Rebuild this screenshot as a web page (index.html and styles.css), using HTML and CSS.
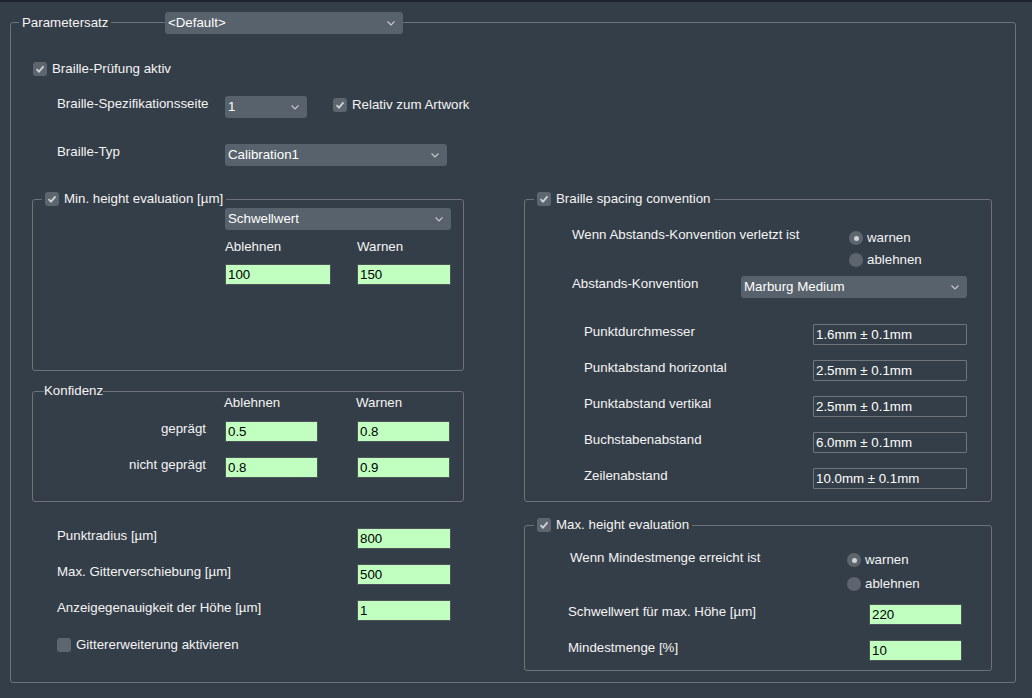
FILE: index.html
```html
<!DOCTYPE html>
<html lang="de">
  <head>
    <meta charset="UTF-8" />
    <title>Braille-Prüfung</title>
    <link rel="stylesheet" href="styles.css">
  </head>
  <body>
    <div class="topbar"></div>

    <section class="group outer">
      <div class="outer-head">
        <span class="title">Parametersatz</span>
        <div class="combo">&lt;Default&gt;<svg class="chev" width="8" height="5" viewBox="0 0 8 5"><polyline points="0.5,0.5 4,4 7.5,0.5"/></svg></div>
      </div>

      <!-- general braille settings -->
      <div class="intro">
        <label class="check"><span class="box on"><svg width="14" height="14" viewBox="0 0 14 14"><path d="M3.5 7.2 L6 9.7 L10.5 4.3"/></svg></span>Braille-Prüfung aktiv</label>

        <div class="row spec-row">
          <span class="lbl">Braille-Spezifikationsseite</span>
          <div class="combo combo-page">1<svg class="chev" width="8" height="5" viewBox="0 0 8 5"><polyline points="0.5,0.5 4,4 7.5,0.5"/></svg></div>
          <label class="check relative"><span class="box on"><svg width="14" height="14" viewBox="0 0 14 14"><path d="M3.5 7.2 L6 9.7 L10.5 4.3"/></svg></span>Relativ zum Artwork</label>
        </div>

        <div class="row type-row">
          <span class="lbl">Braille-Typ</span>
          <div class="combo combo-type">Calibration1<svg class="chev" width="8" height="5" viewBox="0 0 8 5"><polyline points="0.5,0.5 4,4 7.5,0.5"/></svg></div>
        </div>
      </div>

      <div class="columns">
        <!-- left column -->
        <div class="col">
          <div class="group box-min">
            <div class="group-head">
              <label class="check"><span class="box on"><svg width="14" height="14" viewBox="0 0 14 14"><path d="M3.5 7.2 L6 9.7 L10.5 4.3"/></svg></span>Min. height evaluation [µm]</label>
            </div>
            <div class="min-body">
              <div class="combo combo-threshold">Schwellwert<svg class="chev" width="8" height="5" viewBox="0 0 8 5"><polyline points="0.5,0.5 4,4 7.5,0.5"/></svg></div>
              <div class="pair-grid">
                <span>Ablehnen</span>
                <span>Warnen</span>
                <input class="num" value="100" readonly>
                <input class="num" value="150" readonly>
              </div>
            </div>
          </div>

          <div class="group box-conf">
            <div class="conf-head"><span class="title">Konfidenz</span></div>
            <div class="conf-grid">
              <span></span>
              <span>Ablehnen</span>
              <span>Warnen</span>
              <span class="side">geprägt</span>
              <input class="num" value="0.5" readonly>
              <input class="num" value="0.8" readonly>
              <span class="side">nicht geprägt</span>
              <input class="num" value="0.8" readonly>
              <input class="num" value="0.9" readonly>
            </div>
          </div>

          <div class="params">
            <div class="row">
              <span class="lbl">Punktradius [µm]</span>
              <input class="num" value="800" readonly>
            </div>
            <div class="row">
              <span class="lbl">Max. Gitterverschiebung [µm]</span>
              <input class="num" value="500" readonly>
            </div>
            <div class="row">
              <span class="lbl">Anzeigegenauigkeit der Höhe [µm]</span>
              <input class="num" value="1" readonly>
            </div>
            <label class="check grid-ext"><span class="box"></span>Gittererweiterung aktivieren</label>
          </div>
        </div>

        <!-- right column -->
        <div class="col">
          <div class="group box-spacing">
            <div class="group-head">
              <label class="check"><span class="box on"><svg width="14" height="14" viewBox="0 0 14 14"><path d="M3.5 7.2 L6 9.7 L10.5 4.3"/></svg></span>Braille spacing convention</label>
            </div>
            <div class="spacing-body">
              <div class="row">
                <span class="lbl lbl-when">Wenn Abstands-Konvention verletzt ist</span>
                <div class="radios">
                  <label class="radio"><span class="dot on"></span>warnen</label>
                  <label class="radio"><span class="dot"></span>ablehnen</label>
                </div>
              </div>
              <div class="row conv-row">
                <span class="lbl">Abstands-Konvention</span>
                <div class="combo combo-conv">Marburg Medium<svg class="chev" width="8" height="5" viewBox="0 0 8 5"><polyline points="0.5,0.5 4,4 7.5,0.5"/></svg></div>
              </div>
              <div class="measures">
                <div class="row"><span class="lbl">Punktdurchmesser</span><input class="mm" value="1.6mm ± 0.1mm" readonly></div>
                <div class="row"><span class="lbl">Punktabstand horizontal</span><input class="mm" value="2.5mm ± 0.1mm" readonly></div>
                <div class="row"><span class="lbl">Punktabstand vertikal</span><input class="mm" value="2.5mm ± 0.1mm" readonly></div>
                <div class="row"><span class="lbl">Buchstabenabstand</span><input class="mm" value="6.0mm ± 0.1mm" readonly></div>
                <div class="row"><span class="lbl">Zeilenabstand</span><input class="mm" value="10.0mm ± 0.1mm" readonly></div>
              </div>
            </div>
          </div>

          <div class="group box-max">
            <div class="group-head">
              <label class="check"><span class="box on"><svg width="14" height="14" viewBox="0 0 14 14"><path d="M3.5 7.2 L6 9.7 L10.5 4.3"/></svg></span>Max. height evaluation</label>
            </div>
            <div class="max-body">
              <div class="row">
                <span class="lbl lbl-when">Wenn Mindestmenge erreicht ist</span>
                <div class="radios">
                  <label class="radio"><span class="dot on"></span>warnen</label>
                  <label class="radio"><span class="dot"></span>ablehnen</label>
                </div>
              </div>
              <div class="max-fields">
                <div class="row"><span class="lbl">Schwellwert für max. Höhe [µm]</span><input class="num" value="220" readonly></div>
                <div class="row"><span class="lbl">Mindestmenge [%]</span><input class="num" value="10" readonly></div>
              </div>
            </div>
          </div>
        </div>
      </div>
    </section>
  </body>
</html>
```

FILE: styles.css
```css
/* General Styling */
* {
  margin: 0;
  padding: 0;
  box-sizing: border-box;
}

body {
  width: 1032px;
  height: 698px;
  overflow: hidden;
  background-color: #343e48;
  color: #f4f4f4;
  font-family: "Liberation Sans", Arial, sans-serif;
  font-size: 13.3px;
  line-height: 16px;
}

.topbar {
  height: 2px;
  background-color: #1c2530;
}

/* group boxes */
.group {
  border: 1px solid #6c7278;
  border-radius: 3px;
}

.title {
  background-color: #343e48;
  justify-self: start;
}

.outer {
  margin: 20px 16px 0 10px;
  height: 661px;
}

.outer-head {
  display: grid;
  grid-template-columns: 146px 238px;
  align-items: center;
  height: 22px;
  margin: -11px 0 0 8px;
}

.outer-head .title {
  padding: 0 3px;
}

.group-head {
  display: flex;
  height: 16px;
  margin: -9px 0 0 9px;
}

.group-head .check {
  background-color: #343e48;
  padding: 0 3px;
}

/* controls */
.combo {
  display: flex;
  align-items: center;
  justify-content: space-between;
  height: 22px;
  padding: 0 8px 0 3px;
  background-color: #58626c;
  border-radius: 3px;
  color: #fff;
}

.chev {
  fill: none;
  stroke: #c4c8cc;
  stroke-width: 1.2;
}

.check {
  display: flex;
  align-items: center;
  gap: 5px;
  height: 16px;
}

.box {
  width: 14px;
  height: 14px;
  border-radius: 3px;
  background-color: #5d666f;
  flex: none;
}

.box svg {
  display: block;
  fill: none;
  stroke: #cfd2d5;
  stroke-width: 1.8;
}

.radios {
  display: flex;
  flex-direction: column;
  gap: 8px;
  margin-top: 4px;
}

.radio {
  display: flex;
  align-items: center;
  gap: 4px;
  height: 14px;
}

.dot {
  width: 14px;
  height: 14px;
  border-radius: 50%;
  background-color: #5d666f;
  display: flex;
  align-items: center;
  justify-content: center;
}

.dot.on::after {
  content: "";
  width: 5px;
  height: 5px;
  border-radius: 50%;
  background-color: #d0d3d6;
}

.num,
.mm {
  height: 21px;
  padding: 0 2px;
  font: inherit;
  border-radius: 1px;
  outline: none;
}

.num {
  background-color: #c0ffc0;
  border: 1px solid #4c5258;
  color: #000;
}

.mm {
  background-color: #343e48;
  border: 1px solid #6e757c;
  color: #fff;
}

.row {
  display: flex;
  align-items: flex-start;
}

.lbl {
  flex: none;
}

/* intro block */
.intro {
  padding-left: 22px;
}

.intro > .check {
  margin-top: 27px;
}

.intro .row .lbl {
  width: 168px;
  margin-left: 24px;
}

.spec-row {
  margin-top: 19px;
}

.combo-page {
  width: 82px;
}

.relative {
  margin: 1px 0 0 26px;
}

.type-row {
  margin-top: 26px;
}

.combo-type {
  width: 222px;
}

/* columns */
.columns {
  display: grid;
  grid-template-columns: 432px 468px;
  column-gap: 60px;
  margin: 33px 0 0 21px;
}

.box-min {
  height: 172px;
}

.min-body {
  padding-left: 192px;
}

.combo-threshold {
  width: 226px;
  margin-top: 1px;
}

.pair-grid {
  display: grid;
  grid-template-columns: 106px 94px;
  column-gap: 26px;
  row-gap: 9px;
  margin-top: 9px;
}

.box-conf {
  height: 111px;
  margin-top: 20px;
}

.conf-head {
  display: flex;
  height: 16px;
  margin: -9px 0 0 11px;
}

.conf-grid {
  display: grid;
  grid-template-columns: 192px 132px 93px;
  grid-template-rows: 26px 36px 21px;
  margin-top: -4px;
}

.conf-grid > span:nth-child(2) {
  margin-left: -1px;
}

.conf-grid > span:nth-child(3) {
  margin-left: -1px;
}

.conf-grid .num {
  width: 93px;
}

.side {
  text-align: right;
  padding-right: 19px;
}

.params {
  padding-left: 25px;
  margin-top: 26px;
}

.params .row + .row {
  margin-top: 15px;
}

.params .lbl {
  width: 300px;
}

.params .num {
  width: 94px;
}

.grid-ext {
  margin-top: 16px;
}

/* right column */
.box-spacing {
  height: 303px;
}

.spacing-body {
  padding-left: 47px;
}

.spacing-body > .row:first-child {
  margin-top: 20px;
}

.lbl-when {
  width: 277px;
}

.conv-row {
  margin-top: 9px;
}

.conv-row .lbl {
  width: 169px;
}

.combo-conv {
  width: 226px;
}

.measures {
  padding-left: 12px;
  margin-top: 26px;
}

.measures .row + .row {
  margin-top: 15px;
}

.measures .lbl {
  width: 229px;
}

.mm {
  width: 154px;
}

.box-max {
  height: 146px;
  margin-top: 23px;
}

.max-body {
  padding-left: 45px;
}

.max-body > .row:first-child {
  margin-top: 17px;
}

.max-body .radios {
  gap: 10px;
  margin-top: 3px;
}

.max-fields {
  margin: 13px 0 0 -2px;
}

.max-fields .row + .row {
  margin-top: 15px;
}

.max-fields .lbl {
  width: 301px;
}

.max-fields .num {
  width: 93px;
}
```
